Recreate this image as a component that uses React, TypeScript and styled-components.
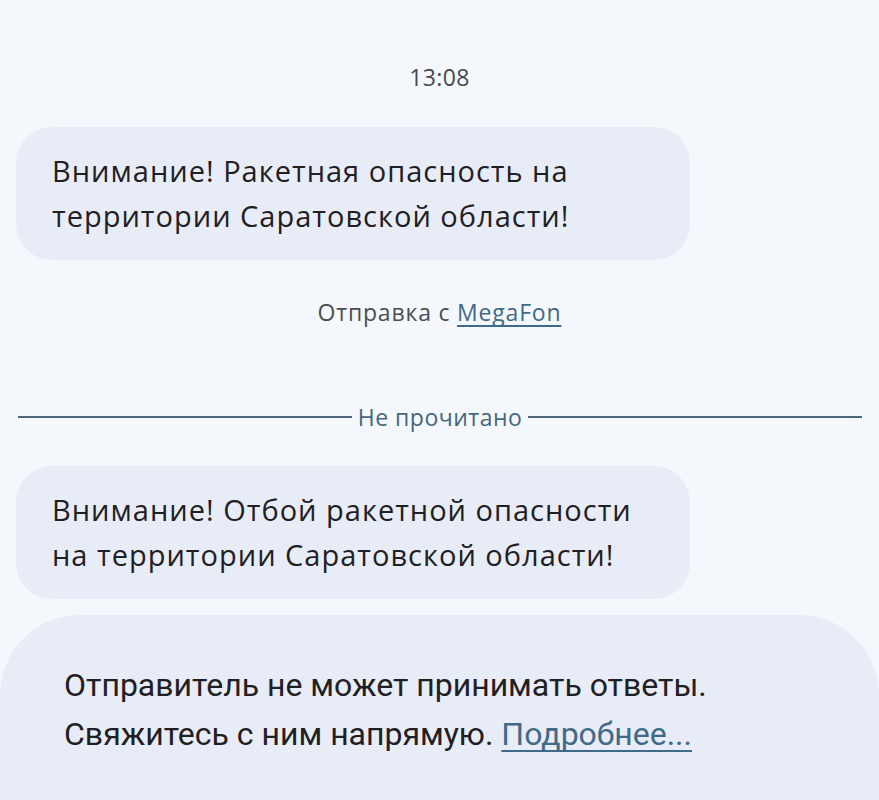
import styled, { createGlobalStyle } from 'styled-components'

const GlobalStyle = createGlobalStyle`
  body {
    margin: 0;
    background: #f4f8fc;
    font-family: 'Open Sans', Roboto, sans-serif;
  }
`

export default function App() {
  return (
    <>
      <GlobalStyle />
      <Page>
        <TimeStamp>13:08</TimeStamp>
        <Bubble>
          Внимание! Ракетная опасность на
          <br />
          территории Саратовской области!
        </Bubble>
        <SourceLine>
          Отправка с <SourceLink>MegaFon</SourceLink>
        </SourceLine>
        <Divider>
          <DividerLine />
          <DividerText>Не прочитано</DividerText>
          <DividerLine />
        </Divider>
        <Bubble $top={34}>
          Внимание! Отбой ракетной опасности
          <br />
          на территории Саратовской области!
        </Bubble>
        <NoticePanel>
          <NoticeText>
            Отправитель не может принимать ответы.
            <br />
            Свяжитесь с ним напрямую. <NoticeLink>Подробнее...</NoticeLink>
          </NoticeText>
        </NoticePanel>
      </Page>
    </>
  )
}

const Page = styled.div`
  display: flex;
  flex-direction: column;
  height: 800px;
  overflow: hidden;
`
const TimeStamp = styled.div`
  margin-top: 62px;
  text-align: center;
  font-size: 23px;
  letter-spacing: 0.4px;
  line-height: 30px;
  color: #46494e;
`
const Bubble = styled.div<{ $top?: number }>`
  box-sizing: border-box;
  width: 674px;
  margin: ${(p) => p.$top ?? 35}px 0 0 16px;
  padding: 21px 36px 22px;
  background: #e8ecf6;
  border-radius: 36px;
  font-size: 29px;
  letter-spacing: 1px;
  line-height: 45px;
  color: #1f2024;
  white-space: nowrap;
`
const SourceLine = styled.div`
  margin-top: 37px;
  text-align: center;
  font-size: 23px;
  letter-spacing: 0.8px;
  line-height: 30px;
  color: #4a4e54;
`
const SourceLink = styled.span`
  color: #3f6a88;
  text-decoration: underline;
  text-decoration-skip-ink: none;
  text-underline-offset: 4px;
`
const Divider = styled.div`
  display: flex;
  align-items: center;
  gap: 6px;
  margin-top: 75px;
  padding: 0 17px 0 18px;
  height: 30px;
`
const DividerLine = styled.div`
  flex: 1;
  height: 2px;
  background: #4d6678;
`
const DividerText = styled.div`
  font-size: 23px;
  letter-spacing: 0.5px;
  color: #46677e;
`
const NoticePanel = styled.div`
  flex: 1;
  margin-top: 16px;
  padding: 46px 64px 0;
  background: #e8ecf6;
  border-radius: 80px 80px 0 0;
`
const NoticeText = styled.div`
  font-family: Roboto, 'Open Sans', sans-serif;
  font-size: 32px;
  line-height: 49px;
  color: #1f2024;
  white-space: nowrap;
`
const NoticeLink = styled.span`
  color: #3f6a88;
  text-decoration: underline;
  text-decoration-thickness: 2px;
  text-decoration-skip-ink: none;
  text-underline-offset: 5px;
`
